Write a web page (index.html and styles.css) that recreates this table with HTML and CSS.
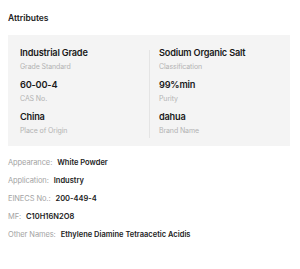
FILE: index.html
```html
<!DOCTYPE html>
<html>
<head>
<meta charset="utf-8">
<link rel="stylesheet" href="styles.css">
</head>
<body>
<div class="page">
  <h2 class="title">Attributes</h2>
  <div class="card">
    <div class="col">
      <div class="item"><div class="val">Industrial Grade</div><div class="lbl">Grade Standard</div></div>
      <div class="item"><div class="val">60-00-4</div><div class="lbl">CAS No.</div></div>
      <div class="item"><div class="val">China</div><div class="lbl">Place of Origin</div></div>
    </div>
    <div class="col col-right">
      <div class="item"><div class="val">Sodium Organic Salt</div><div class="lbl">Classification</div></div>
      <div class="item"><div class="val">99%min</div><div class="lbl">Purity</div></div>
      <div class="item"><div class="val">dahua</div><div class="lbl">Brand Name</div></div>
    </div>
  </div>
  <div class="list">
    <div class="row"><span class="k">Appearance:</span><span class="v">White Powder</span></div>
    <div class="row"><span class="k">Application:</span><span class="v">Industry</span></div>
    <div class="row"><span class="k">EINECS No.:</span><span class="v">200-449-4</span></div>
    <div class="row"><span class="k">MF:</span><span class="v">C10H16N2O8</span></div>
    <div class="row"><span class="k">Other Names:</span><span class="v">Ethylene Diamine Tetraacetic Acidis</span></div>
  </div>
</div>
</body>
</html>
```
FILE: styles.css
```css
* { box-sizing: border-box; }
html, body { margin: 0; padding: 0; background: #fff; }
body { font-family: Inter, "Open Sans", sans-serif; color: #222; }
.page { padding: 12px 10px 0 8px; }
.title { margin: 0 0 10px 0; font-size: 8.5px; font-weight: 600; line-height: 13px; color: #222; }
.card {
  background: #f4f4f4;
  display: flex;
  padding: 12px 12px 8px 12px;
  height: 111px;
}
.col { flex: 0 0 129px; display: flex; flex-direction: column; gap: 6px; }
.col-right { flex: 1; border-left: 1px solid #e4e4e4; padding-left: 9px; margin-top: 3px; height: 88px; }
.col-right .item:first-child { margin-top: -3px; }
.item { display: flex; flex-direction: column; gap: 1px; }
.val { font-size: 9.2px; font-weight: 600; line-height: 12px; letter-spacing: -0.2px; color: #1a1a1a; }
.lbl { font-size: 7px; line-height: 13px; color: #b3b3b3; letter-spacing: -0.1px; }
.list { padding-top: 11px; display: flex; flex-direction: column; gap: 7px; }
.row { display: flex; align-items: baseline; gap: 5px; line-height: 11px; }
.k { font-size: 7.5px; color: #a3a3a3; letter-spacing: -0.1px; }
.v { font-size: 7.5px; font-weight: 600; color: #222; }
```
